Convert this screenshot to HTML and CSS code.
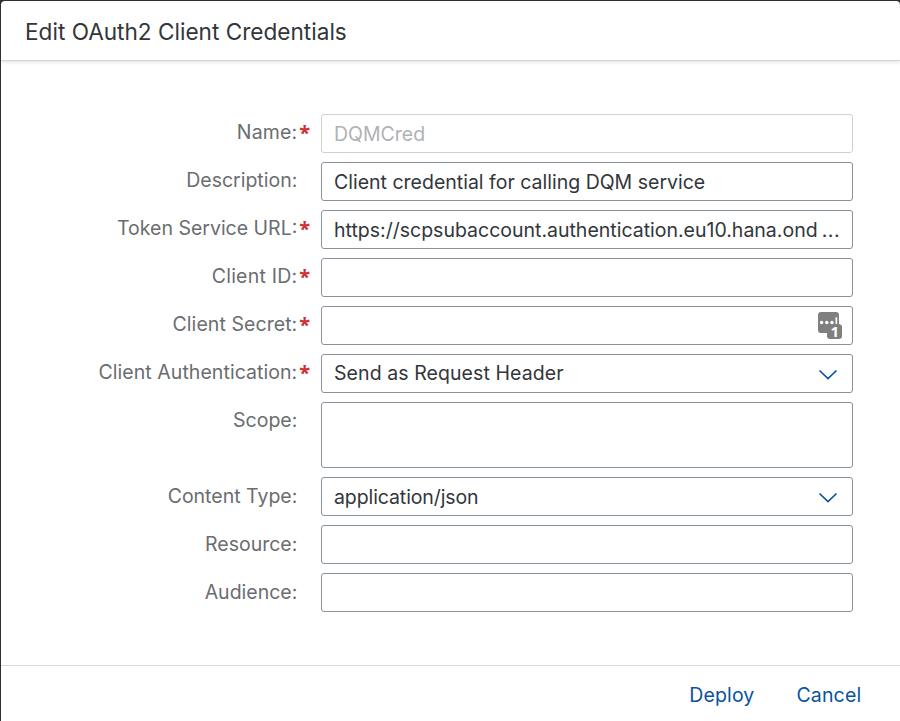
FILE: index.html
```html
<!DOCTYPE html>
<html lang="en">
<head>
<meta charset="utf-8">
<title>Edit OAuth2 Client Credentials</title>
<link rel="stylesheet" href="styles.css">
</head>
<body>
<div class="dialog">
  <header class="header"><h1 class="title">Edit OAuth2 Client Credentials</h1></header>
  <main class="form">
    <div class="row"><div class="label name">Name:</div><span class="star">*</span><div class="field disabled"><span>DQMCred</span></div></div>
    <div class="row"><div class="label">Description:</div><span class="star"></span><div class="field"><span>Client credential for calling DQM service</span></div></div>
    <div class="row"><div class="label">Token Service URL:</div><span class="star">*</span><div class="field"><span>https://scpsubaccount.authentication.eu10.hana.ond</span><span class="dots">...</span></div></div>
    <div class="row"><div class="label client-id">Client ID:</div><span class="star">*</span><div class="field"></div></div>
    <div class="row"><div class="label client">Client Secret:</div><span class="star">*</span><div class="field">
      <svg class="manager" width="24" height="27" viewBox="0 0 24 27">
        <path fill="#7f7f7f" d="M3 0H18Q21 0 21 3V12Q24 12.500 24 15V24Q24 27 21 27H12Q9 27 9 24V21H3Q0 21 0 18V3Q0 0 3 0Z"/>
        <g fill="#fff"><circle cx="3.600" cy="10.500" r="1.700"/><circle cx="8.800" cy="10.500" r="1.700"/><circle cx="14" cy="10.500" r="1.700"/><path d="M17.500 5.300H19.200V12H17.500Z"/></g>
        <text class="count" x="12.500" y="24.500">1</text>
      </svg></div></div>
    <div class="row"><div class="label client-auth">Client Authentication:</div><span class="star">*</span><div class="field select auth"><span>Send as Request Header</span><svg class="chevron" width="20" height="12" viewBox="0 0 20 12"><path d="M1.500 1.500L10 9.600L18.500 1.500"/></svg></div></div>
    <div class="row"><div class="label">Scope:</div><span class="star"></span><div class="field area"></div></div>
    <div class="row low"><div class="label">Content Type:</div><span class="star"></span><div class="field select"><span class="v-type">application/json</span><svg class="chevron" width="20" height="12" viewBox="0 0 20 12"><path d="M1.500 1.500L10 9.600L18.500 1.500"/></svg></div></div>
    <div class="row low"><div class="label">Resource:</div><span class="star"></span><div class="field"></div></div>
    <div class="row low"><div class="label">Audience:</div><span class="star"></span><div class="field"></div></div>
  </main>
  <footer class="footer"><span>Deploy</span><span>Cancel</span></footer>
</div>
</body>
</html>
```
FILE: styles.css
```css
* { box-sizing: border-box; }
body { margin: 0; height: 721px; overflow: hidden; padding: 1px 0 0 1px; background: #2f2f32; font: 19.5px/24px Inter, "Liberation Sans", sans-serif; color: #32363a; }
.dialog { height: 720px; display: flex; flex-direction: column; background: #fff; border-radius: 4px 4px 0 0; overflow: hidden; }
.header { height: 60px; flex: none; padding: 17px 0 0 24px; border-bottom: 1px solid #d5d5d5; box-shadow: 0 1px 4px rgba(0,0,0,.13); }
.title { margin: 0; font-size: 22.6px; line-height: 28px; font-weight: 400; }
.form { flex: 1; padding: 53px 47px 0 0; display: flex; flex-direction: column; gap: 9px; }
.row { display: flex; align-items: flex-start; }
.label { width: 298px; padding: 6px 1.7px 0 0; text-align: right; color: #6a6d70; white-space: nowrap; }
.low .label { padding-top: 7px; }
.name { letter-spacing: .15px; }
.client { letter-spacing: .07px; }
.client-id { letter-spacing: .22px; }
.client-auth { letter-spacing: .06px; }
.star { width: 22px; padding: 7px 0 0 .3px; color: #cc2f34; font: 700 20px/24px "Noto Sans", sans-serif; }
.field { width: 532px; height: 39px; border: 1px solid #89919a; border-radius: 3px; padding: 1px 12px 0; display: flex; align-items: center; white-space: nowrap; }
.disabled { border-color: #cfd1d3; color: #b0b2b4; }
.area { height: 66px; }
.select { justify-content: space-between; padding-right: 14px; }
.auth { letter-spacing: .08px; padding-top: 0; }
.auth span { margin-top: -1px; }
.chevron { position: relative; top: 1px; fill: none; stroke: #0854a0; stroke-width: 1.7; }
.manager { margin-left: auto; margin-right: -2px; margin-bottom: 1px; }
.count { font: 700 15px "Open Sans", sans-serif; fill: #fff; }
.dots { margin-left: auto; letter-spacing: .5px; }
.v-type { letter-spacing: -.1px; }
.footer { height: 56px; flex: none; border-top: 1px solid #d9d9d9; padding: 17px 38.7px 0 0; display: flex; justify-content: flex-end; gap: 42px; color: #0854a0; letter-spacing: .15px; }
```
